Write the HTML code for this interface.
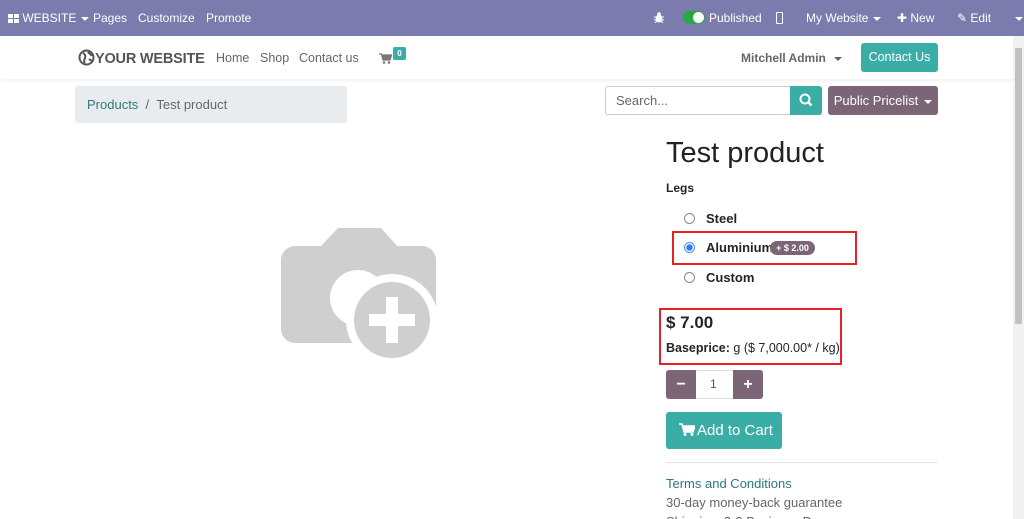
<!DOCTYPE html>
<html style="overflow:hidden;width:1024px;height:519px"><head><meta charset="utf-8"><style>
*{box-sizing:border-box;margin:0;padding:0}
body{width:1024px;height:519px;overflow:hidden;background:#fff;font-family:"Liberation Sans",sans-serif;position:relative;color:#212529}
.abs{position:absolute}
.top{left:0;top:0;width:1024px;height:36px;background:#7c7bad;color:#fff;font-size:12px}
.top span{position:absolute;top:11px}
.hdr{top:36px;left:0;width:1013px;height:43px;background:#fff;box-shadow:0 2px 3px rgba(0,0,0,.06)}
.sb{left:1013px;top:36px;width:11px;height:483px;background:#f1f1f1}
.sb div{position:absolute;left:2px;top:12px;width:7px;height:276px;background:#c1c1c1}
.caret{display:inline-block;border-left:4px solid transparent;border-right:4px solid transparent;border-top:4px solid currentColor;vertical-align:middle;margin-left:5px}
.radio{width:11px;height:11px;border:1px solid #888;border-radius:50%;background:#fff}
</style></head><body>
<div class="abs top">
 <span style="left:8px"><svg width="11" height="9" style="vertical-align:-1px"><rect x="0" y="0" width="5" height="4" fill="#fff"/><rect x="6" y="0" width="5" height="4" fill="#fff"/><rect x="0" y="5" width="5" height="4" fill="#fff"/><rect x="6" y="5" width="5" height="4" fill="#fff"/></svg> WEBSITE<i class="caret"></i></span>
 <span style="left:93px">Pages</span><span style="left:138px">Customize</span><span style="left:206px">Promote</span>
 <span style="left:654px;top:12px"><svg width="10" height="11"><ellipse cx="5" cy="6.5" rx="3.3" ry="4" fill="#fff"/><circle cx="5" cy="2" r="1.8" fill="#fff"/><path d="M0 5h10M0 8h10M1 11l2-2M9 11l-2-2" stroke="#fff" stroke-width="1"/></svg></span>
 <span style="left:683px;top:11px;width:22px;height:13px;border-radius:7px;background:#28a745"><i style="position:absolute;right:1px;top:1px;width:11px;height:11px;border-radius:50%;background:#fff"></i></span>
 <span style="left:709px">Published</span>
 <span style="left:776px;top:12px;width:7px;height:12px;border:1.5px solid #fff;border-radius:1px"></span>
 <span style="left:806px">My Website<i class="caret"></i></span>
 <span style="left:897px">✚ New</span>
 <span style="left:957px">✎ Edit</span>
 <span style="left:1010px"><i class="caret"></i></span>
</div>
<div class="abs hdr">
 <div class="abs" style="left:78px;top:13px;font-size:14.5px;color:#555;font-weight:bold;letter-spacing:-.2px"><svg width="17" height="17" style="vertical-align:-3px"><circle cx="8.5" cy="8.5" r="7" fill="none" stroke="#555" stroke-width="2"/><path d="M5 4c2 1 3 3 2 5s-1 4 0 5M10 3c1 2 3 2 4 4M11 10c1 1 2 1 3 2" stroke="#555" stroke-width="2" fill="none"/></svg>YOUR WEBSITE</div>
 <div class="abs" style="left:216px;top:15px;font-size:12.5px;color:#666">Home</div>
 <div class="abs" style="left:260px;top:15px;font-size:12.5px;color:#666">Shop</div>
 <div class="abs" style="left:299px;top:15px;font-size:12.5px;color:#666">Contact us</div>
 <svg class="abs" style="left:379px;top:17px" width="13" height="11"><path d="M0 1h2.5l1.5 6h7l1.5-5H3" fill="#777" stroke="#777" stroke-width="1.3"/><circle cx="5" cy="9.5" r="1.3" fill="#777"/><circle cx="10" cy="9.5" r="1.3" fill="#777"/></svg>
 <div class="abs" style="left:393px;top:11px;width:13px;height:13px;background:#3aada6;border-radius:2px;color:#fff;font-size:8px;font-weight:bold;text-align:center;line-height:13px">0</div>
 <div class="abs" style="left:741px;top:15px;font-size:12px;color:#666;font-weight:bold">Mitchell Admin<i class="caret" style="margin-left:8px"></i></div>
 <div class="abs" style="left:861px;top:7px;width:77px;height:29px;background:#3aada6;border-radius:3px;color:#fff;font-size:12.5px;text-align:center;line-height:29px">Contact Us</div>
</div>
<div class="abs sb"><div></div></div>
<div class="abs" style="left:75px;top:86px;width:272px;height:37px;background:#e9ecef;border-radius:3px;font-size:13px;line-height:37px;padding-left:12px;color:#666"><span style="color:#2a7a78">Products</span>&nbsp;&nbsp;/&nbsp;&nbsp;Test product</div>
<div class="abs" style="left:605px;top:86px;width:186px;height:29px;border:1px solid #ccc;border-radius:3px 0 0 3px;font-size:13px;color:#666;line-height:27px;padding-left:10px">Search...</div>
<div class="abs" style="left:790px;top:86px;width:32px;height:29px;background:#3aada6;border-radius:0 3px 3px 0"><svg width="32" height="29"><circle cx="15" cy="13" r="4.5" stroke="#fff" stroke-width="2" fill="none"/><path d="M18 16l3.5 3.5" stroke="#fff" stroke-width="2.5"/></svg></div>
<div class="abs" style="left:828px;top:86px;width:110px;height:29px;background:#7c6576;border-radius:3px;color:#fff;font-size:13px;line-height:29px;text-align:center">Public Pricelist<i class="caret" style="margin-left:6px"></i></div>
<svg class="abs" style="left:270px;top:215px" width="180" height="160">
 <path d="M50 32 L68 13 L111 13 L128 32 Z" fill="#cfcfcf"/>
 <rect x="11" y="31" width="155" height="97" rx="14" fill="#cfcfcf"/>
 <circle cx="88" cy="83" r="28" fill="#fff"/>
 <circle cx="122" cy="105" r="46" fill="#fff"/>
 <circle cx="122" cy="105" r="38" fill="#cfcfcf"/>
 <rect x="116" y="82" width="12" height="46" fill="#fff"/>
 <rect x="99" y="99" width="46" height="12" fill="#fff"/>
</svg>
<div class="abs" style="left:666px;top:137px;font-size:29px;color:#222">Test product</div>
<div class="abs" style="left:666px;top:181px;font-size:12px;font-weight:bold">Legs</div>
<div class="abs radio" style="left:684px;top:213px"></div>
<div class="abs" style="left:706px;top:211px;font-size:13px;font-weight:bold">Steel</div>
<div class="abs" style="left:672px;top:231px;width:185px;height:34px;border:2px solid #e8202a"></div>
<div class="abs radio" style="left:684px;top:242px;border-color:#4a8cf7;background:radial-gradient(circle,#2f7cf6 45%,#fff 55%)"></div>
<div class="abs" style="left:706px;top:240px;font-size:13px;font-weight:bold">Aluminium</div>
<div class="abs" style="left:770px;top:241px;width:45px;height:14px;border-radius:7px;background:#7c6576;color:#fff;font-size:9px;font-weight:bold;text-align:center;line-height:14px">+ $ 2.00</div>
<div class="abs radio" style="left:684px;top:272px"></div>
<div class="abs" style="left:706px;top:270px;font-size:13px;font-weight:bold">Custom</div>
<div class="abs" style="left:659px;top:308px;width:183px;height:57px;border:2px solid #e8202a"></div>
<div class="abs" style="left:666px;top:313px;font-size:17px;font-weight:bold">$ 7.00</div>
<div class="abs" style="left:666px;top:341px;font-size:12.5px"><b>Baseprice:</b> g ($ 7,000.00* / kg)</div>
<div class="abs" style="left:666px;top:370px;width:97px;height:29px;border:1px solid #ddd;border-radius:3px"></div>
<div class="abs" style="left:666px;top:370px;width:30px;height:29px;background:#7c6576;border-radius:3px 0 0 3px;color:#fff;text-align:center;line-height:29px;font-weight:bold;font-size:16px">−</div>
<div class="abs" style="left:710px;top:377px;font-size:12px;color:#555">1</div>
<div class="abs" style="left:733px;top:370px;width:30px;height:29px;background:#7c6576;border-radius:0 3px 3px 0;color:#fff;text-align:center;line-height:29px;font-weight:bold;font-size:16px">+</div>
<div class="abs" style="left:666px;top:412px;width:116px;height:37px;background:#3aada6;border-radius:3px;color:#fff;font-size:15px;line-height:37px;padding-left:13px"><svg width="16" height="13" style="vertical-align:-1px;margin-right:2px"><path d="M0 1h3l2 8h9l2-6H4" fill="#fff" stroke="#fff" stroke-width="1.5"/><circle cx="6" cy="11.5" r="1.5" fill="#fff"/><circle cx="13" cy="11.5" r="1.5" fill="#fff"/></svg>Add to Cart</div>
<div class="abs" style="left:666px;top:462px;width:272px;height:1px;background:#e6e6e6"></div>
<div class="abs" style="left:666px;top:476px;font-size:13px;color:#2a7a78">Terms and Conditions</div>
<div class="abs" style="left:666px;top:495px;font-size:13px;color:#666">30-day money-back guarantee</div>
<div class="abs" style="left:666px;top:514px;font-size:13px;color:#666">Shipping: 2-3 Business Days</div>
</body></html>
